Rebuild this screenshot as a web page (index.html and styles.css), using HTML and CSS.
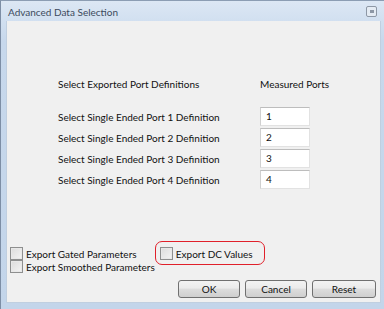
FILE: index.html
```html
<!DOCTYPE html>
<html>
<head>
<meta charset="utf-8">
<link rel="stylesheet" href="styles.css">
</head>
<body>
<div class="window">
  <div class="titlebar">
    <span class="title">Advanced Data Selection</span>
    <span class="restore"><span class="restore-inner"></span></span>
  </div>
  <div class="content">
    <div class="ports">
      <div class="head-label">Select Exported Port Definitions</div>
      <div class="head-value">Measured Ports</div>
      <div class="label">Select Single Ended Port 1 Definition</div>
      <div class="field">1</div>
      <div class="label">Select Single Ended Port 2 Definition</div>
      <div class="field">2</div>
      <div class="label">Select Single Ended Port 3 Definition</div>
      <div class="field">3</div>
      <div class="label">Select Single Ended Port 4 Definition</div>
      <div class="field">4</div>
    </div>
    <div class="options">
      <div class="opt-col">
        <label class="check"><span class="box"></span>Export Gated Parameters</label>
        <label class="check"><span class="box"></span>Export Smoothed Parameters</label>
      </div>
      <div class="highlight">
        <label class="check"><span class="box"></span>Export DC Values</label>
      </div>
    </div>
    <div class="buttons">
      <button class="btn">OK</button>
      <button class="btn">Cancel</button>
      <button class="btn">Reset</button>
    </div>
  </div>
</div>
</body>
</html>
```

FILE: styles.css
```css
html, body {
  margin: 0;
  padding: 0;
  background: #ffffff;
}
.window {
  width: 384px;
  height: 309px;
  box-sizing: border-box;
  border-left: 1px solid #7d8ea5;
  border-top: 1px solid #8c9db3;
  background: linear-gradient(#dce7f4, #c7d8ec 40px, #c3d5ea);
  padding: 0 3px 6px 5px;
  display: flex;
  flex-direction: column;
  font-family: "Lato", "Open Sans", sans-serif;
  font-size: 10px;
  color: #111111;
}
.titlebar {
  height: 20px;
  display: flex;
  align-items: center;
  justify-content: space-between;
  padding: 0 4px 0 2px;
}
.title {
  font-size: 10px;
  color: #3c4a5c;
  padding-top: 1px;
}
.restore {
  width: 9px;
  height: 9px;
  border: 1px solid #8d97a5;
  border-radius: 2px;
  background: #e4ebf3;
  display: flex;
  align-items: center;
  justify-content: center;
  margin-top: 1px;
}
.restore-inner {
  width: 4px;
  height: 3px;
  background: #8d97a5;
}
.content {
  flex: 1;
  background: #f0f0f0;
  border: 1px solid #c0cfe0;
  border-top: none;
  display: flex;
  flex-direction: column;
  padding: 0 4px 4px 3px;
}
.ports {
  display: grid;
  grid-template-columns: 202px auto;
  row-gap: 2px;
  margin: 56px 0 0 48px;
  align-items: center;
  justify-items: start;
}
.head-label, .head-value {
  margin-bottom: 14px;
  line-height: 14px;
}
.field {
  width: 43px;
  height: 17px;
  background: #ffffff;
  border: 1px solid #e2e2e2;
  border-top-color: #bdbdbd;
  border-left-color: #d0d0d0;
  padding-left: 5px;
  line-height: 17px;
}
.options {
  margin-top: auto;
  display: flex;
  align-items: flex-start;
  gap: 0;
}
.opt-col {
  display: flex;
  flex-direction: column;
  padding-top: 6px;
}
.check {
  display: flex;
  align-items: center;
  gap: 3px;
  height: 13px;
  font-size: 10px;
}
.box {
  width: 11px;
  height: 11px;
  border: 1px solid #8e8f8f;
  background: linear-gradient(135deg, #dcdcdc, #f4f4f4);
  box-shadow: inset 0 0 0 1px #e8e8e8;
}
.highlight {
  border: 1px solid #e0202a;
  border-radius: 7px;
  padding: 5px 11px 4px 4px;
}
.buttons {
  display: flex;
  justify-content: flex-end;
  gap: 5px;
  margin-top: 7px;
}
.btn {
  font-family: "Lato", "Open Sans", sans-serif;
  font-size: 10px;
  color: #111111;
  height: 18px;
  border: 1px solid #707070;
  border-radius: 3px;
  background: linear-gradient(#f3f3f3, #ebebeb 45%, #dddddd 50%, #cfcfcf);
  padding: 0;
  line-height: 14px;
}
.btn:nth-child(1) { width: 62px; }
.btn:nth-child(2) { width: 62px; }
.btn:nth-child(3) { width: 64px; }
```
